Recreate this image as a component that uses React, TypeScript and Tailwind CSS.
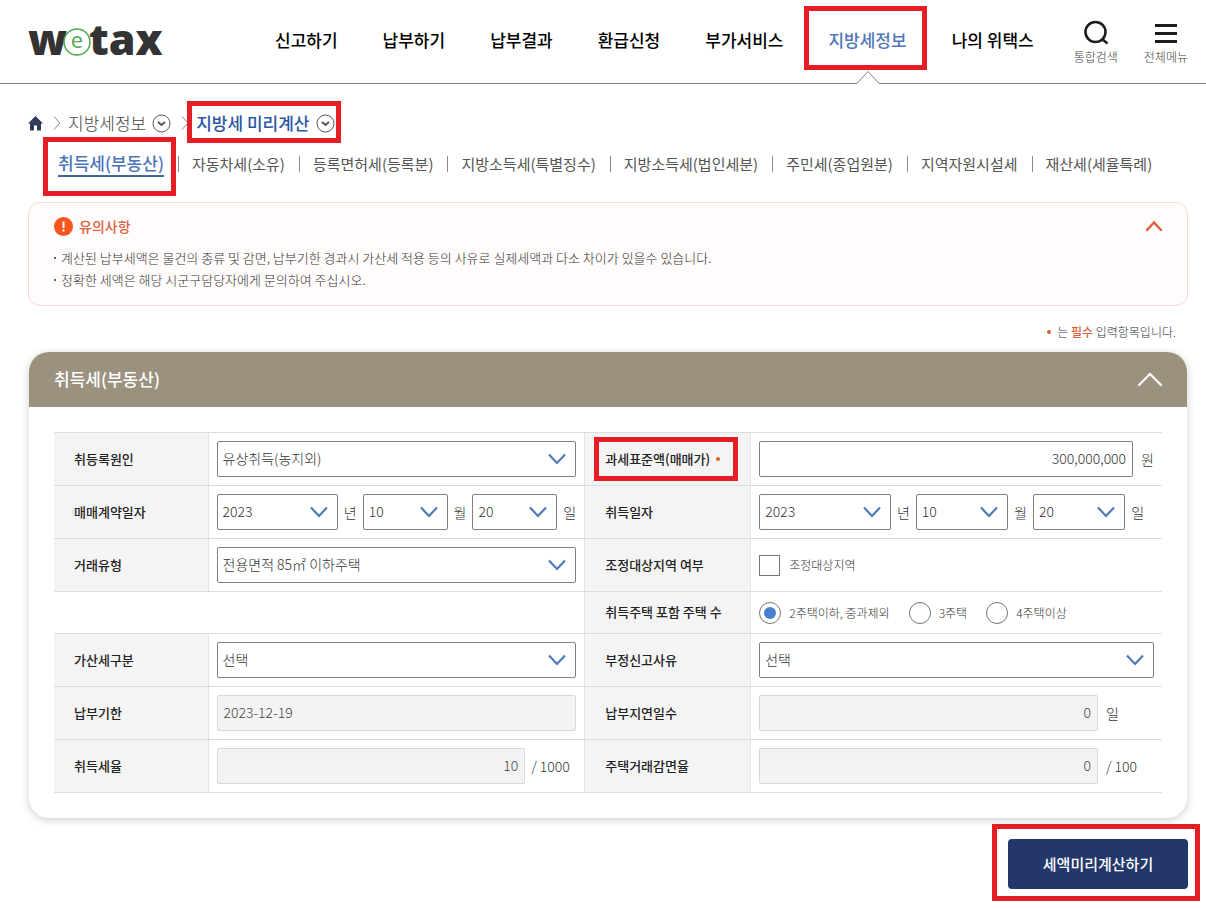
import React, { useState } from 'react';
import clsx from 'clsx';

const NAV_ITEMS = ['신고하기', '납부하기', '납부결과', '환급신청', '부가서비스', '지방세정보', '나의 위택스'];
const ACTIVE_NAV = '지방세정보';

const TABS = [
  '취득세(부동산)',
  '자동차세(소유)',
  '등록면허세(등록분)',
  '지방소득세(특별징수)',
  '지방소득세(법인세분)',
  '주민세(종업원분)',
  '지역자원시설세',
  '재산세(세율특례)',
];

const NOTICES = [
  '계산된 납부세액은 물건의 종류 및 감면, 납부기한 경과시 가산세 적용 등의 사유로 실제세액과 다소 차이가 있을수 있습니다.',
  '정확한 세액은 해당 시군구담당자에게 문의하여 주십시오.',
];

const HOUSE_COUNTS = ['2주택이하, 중과제외', '3주택', '4주택이상'];

// Red guide frame laid over the item the user has to look at
const Highlight: React.FC<{ className: string }> = ({ className }) => (
  <span aria-hidden="true" className={clsx('absolute border-[5px] border-[#e71d25] pointer-events-none', className)} />
);

const Logo: React.FC = () => (
  <a href="#" aria-label="wetax" className="shrink-0">
    <svg width="140" height="72" viewBox="0 0 140 72" className="font-['Open_Sans','Noto_Sans',sans-serif]">
      <text x="0" y="49" fontSize="43" fontWeight="800" fill="#333333">w</text>
      <text x="61" y="49" fontSize="43" fontWeight="800" fill="#333333">tax</text>
      <circle cx="49" cy="36" r="13" fill="#ffffff" stroke="#4fa84f" strokeWidth="1.5" />
      <text x="49" y="42" fontSize="22" fontWeight="500" fill="#4fa84f" textAnchor="middle">e</text>
    </svg>
  </a>
);

const Header: React.FC = () => (
  <header className="h-[84px] border-b border-[#808080] pl-7 pr-[18px] flex items-center">
    <Logo />
    <nav className="ml-[107px] h-full flex gap-[45px] text-[17px] font-medium text-black whitespace-nowrap">
      {NAV_ITEMS.map((item) => (
        <a
          key={item}
          href="#"
          className={clsx('relative flex items-center pb-1', item === ACTIVE_NAV && 'text-[#5078b8]')}
        >
          {item}
          {item === ACTIVE_NAV && (
            <>
              <Highlight className="-left-6 -right-5 top-[6px] h-16" />
              <svg width="24" height="14" viewBox="0 0 24 14" className="absolute left-1/2 -translate-x-1/2 -bottom-px">
                <path d="M1 13.5 L12 1.5 L23 13.5 V14 H1 Z" fill="#ffffff" />
                <path d="M0 13.5 H1 L12 1.5 L23 13.5 H24" fill="none" stroke="#808080" />
              </svg>
            </>
          )}
        </a>
      ))}
    </nav>
    <div className="ml-auto flex gap-[26px] text-xs font-light text-[#444444] whitespace-nowrap">
      <button type="button" className="flex flex-col items-center">
        <svg width="26" height="26" viewBox="0 0 26 26" fill="none" stroke="#1c1c1c" strokeWidth="2.6">
          <circle cx="12.5" cy="13" r="10" />
          <path d="M19 20 L24.5 24.5" />
        </svg>
        <span className="mt-1">통합검색</span>
      </button>
      <button type="button" className="flex flex-col items-center">
        <svg width="26" height="26" viewBox="0 0 26 26" fill="none" stroke="#1c1c1c" strokeWidth="3">
          <path d="M2 6.5 H24 M2 14.5 H24 M2 22.5 H24" />
        </svg>
        <span className="mt-1">전체메뉴</span>
      </button>
    </div>
  </header>
);

const CrumbArrow: React.FC = () => (
  <svg width="8" height="16" viewBox="0 0 8 16" fill="none" stroke="#888888" aria-hidden="true">
    <path d="M1 1.5 L7 8 L1 14.5" />
  </svg>
);

const CrumbToggle: React.FC<{ label: string }> = ({ label }) => (
  <button type="button" aria-label={label} className="ml-[6px]">
    <svg width="19" height="19" viewBox="0 0 19 19" fill="none" stroke="#555555">
      <circle cx="9.5" cy="9.5" r="8.5" />
      <path d="M6 8 L9.5 11 L13 8" strokeWidth="2" />
    </svg>
  </button>
);

const Breadcrumb: React.FC = () => (
  <nav aria-label="현재 위치" className="flex items-center h-[26px] text-[17px] font-light text-[#444444] whitespace-nowrap">
    <a href="#" aria-label="홈">
      <svg width="15" height="15" viewBox="0 0 15 15" fill="#2f3b59">
        <path d="M7.5 0 L15 7.5 H13 V14.5 H9 V9.5 H6 V14.5 H2 V7.5 H0 Z" />
      </svg>
    </a>
    <span className="ml-[10px] mr-[7px]"><CrumbArrow /></span>
    <a href="#">지방세정보</a>
    <CrumbToggle label="지방세정보 메뉴 열기" />
    <span className="ml-[10px] mr-[7px]"><CrumbArrow /></span>
    <span className="relative flex items-center">
      <a href="#" className="font-medium text-[#2a57a5]">지방세 미리계산</a>
      <CrumbToggle label="지방세 미리계산 메뉴 열기" />
      <Highlight className="-left-[9px] -right-[6px] -top-[9px] -bottom-[7px]" />
    </span>
  </nav>
);

const TaxTabs: React.FC = () => (
  <ul className="mt-[14px] pl-[30px] h-7 flex items-center gap-[14px] text-[15px] text-[#555555] whitespace-nowrap">
    {TABS.map((tab, idx) => (
      <li key={tab} className="flex items-center gap-[13px]">
        {idx > 0 && <span aria-hidden="true" className="w-px h-4 bg-[#888888]" />}
        {idx === 0 ? (
          <span className="relative">
            <a href="#" className="block text-[17px] leading-6 font-medium text-[#4a74b8] border-b-2 border-[#40689e]">{tab}</a>
            <Highlight className="-left-[15px] -right-3 -top-[14px] -bottom-[19px]" />
          </span>
        ) : (
          <a href="#">{tab}</a>
        )}
      </li>
    ))}
  </ul>
);

const Notice: React.FC = () => (
  <section className="mt-6 border border-[#f3dcd5] bg-[#fffcfb] rounded-xl pl-[25px] pr-6 pt-[11px] pb-[14px]">
    <div className="flex items-center h-6">
      <svg width="19" height="19" viewBox="0 0 19 19" aria-hidden="true">
        <circle cx="9.5" cy="9.5" r="9.5" fill="#f9561f" />
        <path d="M9.5 4.5 V11" stroke="#ffffff" strokeWidth="2" />
        <path d="M9.5 12.5 V14.5" stroke="#ffffff" strokeWidth="2" />
      </svg>
      <h2 className="ml-[6px] text-sm font-medium text-[#dd5f3c]">유의사항</h2>
      <button type="button" aria-label="유의사항 접기" className="ml-auto">
        <svg width="18" height="12" viewBox="0 0 18 12" fill="none" stroke="#dd5f3c" strokeWidth="2.4" strokeLinecap="round">
          <path d="M2 10 L9 2.5 L16 10" />
        </svg>
      </button>
    </div>
    <ul className="mt-[9px] text-[13px] leading-[22px] font-light text-[#333333]">
      {NOTICES.map((text) => (
        <li key={text} className="flex items-center gap-[5px]">
          <span aria-hidden="true" className="size-[2px] bg-[#666666]" />
          {text}
        </li>
      ))}
    </ul>
  </section>
);

const Chevron: React.FC = () => (
  <svg
    width="18" height="12" viewBox="0 0 18 12" fill="none" stroke="#4f7ab8" strokeWidth="2.2"
    className="absolute right-[10px] top-1/2 -translate-y-1/2 pointer-events-none"
  >
    <path d="M1 1.5 L9 10 L17 1.5" />
  </svg>
);

interface SelectBoxProps {
  id: string;
  value: string;
  label?: string;
  className?: string;
}

const SelectBox: React.FC<SelectBoxProps> = ({ id, value, label, className = 'w-full' }) => (
  <div className={clsx('relative min-w-0', className)}>
    <select
      id={id}
      aria-label={label}
      className="appearance-none block w-full h-9 pl-[5px] pr-8 pb-[2px] border border-[#808080] rounded-xs bg-white text-sm font-light text-[#333333]"
    >
      <option>{value}</option>
    </select>
    <Chevron />
  </div>
);

const DateFields: React.FC<{ id: string; name: string }> = ({ id, name }) => (
  <div className="flex items-center gap-[6px]">
    <SelectBox id={id} value="2023" className="flex-[10]" />
    <span>년</span>
    <SelectBox id={`${id}-month`} label={`${name} 월`} value="10" className="flex-[7]" />
    <span>월</span>
    <SelectBox id={`${id}-day`} label={`${name} 일`} value="20" className="flex-[7]" />
    <span>일</span>
  </div>
);

const READONLY_INPUT = 'min-w-0 flex-1 h-9 px-[6px] pb-[2px] border border-[#d8d8d8] rounded-xs bg-[#f3f3f3] text-sm font-light text-[#444444]';

interface LabelCellProps {
  htmlFor?: string;
  right?: boolean;
  children: React.ReactNode;
}

const LabelCell: React.FC<LabelCellProps> = ({ htmlFor, right, children }) => (
  <th
    scope="row"
    className={clsx(
      'pl-5 bg-[#f4f4f4] border-r border-[#e4e4e4] text-left text-[13px] font-medium text-[#222222] border-y border-y-[#dcdcdc]',
      right && 'border-l'
    )}
  >
    {htmlFor ? <label htmlFor={htmlFor}>{children}</label> : children}
  </th>
);

const Cell: React.FC<{ className?: string; children: React.ReactNode }> = ({ className = 'px-2', children }) => (
  <td className={clsx('border-y border-[#dcdcdc]', className)}>{children}</td>
);

const TaxForm: React.FC = () => {
  const [price, setPrice] = useState('300,000,000');
  const [regulated, setRegulated] = useState(false);
  const [houses, setHouses] = useState(HOUSE_COUNTS[0]);

  return (
    <table className="w-full table-fixed border-collapse text-sm font-light text-[#333333]">
      <colgroup>
        <col className="w-[154px]" />
        <col className="w-[34%]" />
        <col className="w-[166px]" />
        <col />
      </colgroup>
      <tbody>
        <tr className="h-[53px]">
          <LabelCell htmlFor="reason">취등록원인</LabelCell>
          <Cell><SelectBox id="reason" value="유상취득(농지외)" /></Cell>
          <LabelCell htmlFor="price" right>
            <span className="relative inline-flex items-center gap-[6px]">
              과세표준액(매매가)
              <span className="size-1 rounded-full bg-[#d9622b]" />
              <Highlight className="-left-[11px] -right-[18px] -top-[13px] -bottom-[13px]" />
            </span>
          </LabelCell>
          <Cell>
            <div className="flex items-center gap-2">
              <input
                id="price"
                type="text"
                value={price}
                onChange={(e) => setPrice(e.target.value)}
                className="min-w-0 flex-1 h-9 px-[6px] pb-[2px] border border-[#808080] rounded-xs text-right text-sm font-light"
              />
              <span>원</span>
            </div>
          </Cell>
        </tr>
        <tr className="h-[53px]">
          <LabelCell htmlFor="contract">매매계약일자</LabelCell>
          <Cell><DateFields id="contract" name="매매계약일자" /></Cell>
          <LabelCell htmlFor="acquired" right>취득일자</LabelCell>
          <Cell className="pl-2 pr-[18px]"><DateFields id="acquired" name="취득일자" /></Cell>
        </tr>
        <tr className="h-[53px]">
          <LabelCell htmlFor="deal">거래유형</LabelCell>
          <Cell><SelectBox id="deal" value="전용면적 85㎡ 이하주택" /></Cell>
          <LabelCell right>조정대상지역 여부</LabelCell>
          <Cell>
            <label className="flex items-center gap-[9px] text-xs">
              <input
                type="checkbox"
                checked={regulated}
                onChange={(e) => setRegulated(e.target.checked)}
                className="appearance-none size-[21px] border border-[#767676] bg-white p-1 bg-clip-content checked:bg-[#4a7fd0]"
              />
              조정대상지역
            </label>
          </Cell>
        </tr>
        <tr className="h-[42px]">
          <td colSpan={2} />
          <LabelCell right>취득주택 포함 주택 수</LabelCell>
          <Cell>
            <div className="flex items-center gap-[19px] text-xs whitespace-nowrap">
              {HOUSE_COUNTS.map((item) => (
                <label key={item} className="flex items-center gap-2">
                  <input
                    type="radio"
                    name="houses"
                    checked={houses === item}
                    onChange={() => setHouses(item)}
                    className="appearance-none size-[22px] rounded-full border border-[#767676] p-1 bg-clip-content checked:bg-[#4a7fd0]"
                  />
                  {item}
                </label>
              ))}
            </div>
          </Cell>
        </tr>
        <tr className="h-[53px]">
          <LabelCell htmlFor="penalty">가산세구분</LabelCell>
          <Cell><SelectBox id="penalty" value="선택" /></Cell>
          <LabelCell htmlFor="fraud" right>부정신고사유</LabelCell>
          <Cell><SelectBox id="fraud" value="선택" /></Cell>
        </tr>
        <tr className="h-[53px]">
          <LabelCell htmlFor="due">납부기한</LabelCell>
          <Cell>
            <div className="flex"><input id="due" type="text" readOnly value="2023-12-19" className={READONLY_INPUT} /></div>
          </Cell>
          <LabelCell htmlFor="delay" right>납부지연일수</LabelCell>
          <Cell>
            <div className="flex items-center gap-2">
              <input id="delay" type="text" readOnly value="0" className={clsx(READONLY_INPUT, 'text-right')} />
              <span className="w-12">일</span>
            </div>
          </Cell>
        </tr>
        <tr className="h-[53px]">
          <LabelCell htmlFor="rate">취득세율</LabelCell>
          <Cell>
            <div className="flex items-center gap-[6px]">
              <input id="rate" type="text" readOnly value="10" className={clsx(READONLY_INPUT, 'text-right')} />
              <span className="w-[45px]">/ 1000</span>
            </div>
          </Cell>
          <LabelCell htmlFor="discount" right>주택거래감면율</LabelCell>
          <Cell>
            <div className="flex items-center gap-2">
              <input id="discount" type="text" readOnly value="0" className={clsx(READONLY_INPUT, 'text-right')} />
              <span className="w-12">/ 100</span>
            </div>
          </Cell>
        </tr>
      </tbody>
    </table>
  );
};

const App: React.FC = () => (
  <div className="min-h-screen bg-white font-['Noto_Sans_CJK_KR',sans-serif]">
    <Header />
    <main className="pl-7 pr-[18px] pt-[26px] pb-5">
      <Breadcrumb />
      <TaxTabs />
      <Notice />

      <p className="mt-4 pr-3 flex items-center justify-end text-xs leading-5 font-light text-[#333333]">
        <span className="size-1 mr-[6px] rounded-full bg-[#d9622b]" />
        <span>는 <strong className="font-medium text-[#dd5f3c]">필수</strong> 입력항목입니다.</span>
      </p>

      <section className="mt-[10px] mx-px rounded-[20px] bg-white shadow-[0_2px_8px_rgba(0,0,0,0.2)]">
        <div className="h-[55px] pl-[25px] pr-6 pb-[2px] flex items-center justify-between rounded-t-[20px] bg-[#9a917f]">
          <h1 className="text-[17px] font-medium text-white">취득세(부동산)</h1>
          <button type="button" aria-label="취득세(부동산) 접기">
            <svg width="26" height="16" viewBox="0 0 26 16" fill="none" stroke="#ffffff" strokeWidth="2.2" strokeLinecap="round">
              <path d="M2 14 L13 3 L24 14" />
            </svg>
          </button>
        </div>
        <div className="p-[25px]">
          <TaxForm />
        </div>
      </section>

      <div className="mt-[21px] flex justify-end">
        <div className="relative">
          <button type="button" className="block w-[180px] h-[50px] rounded-sm bg-[#22386b] text-[15px] font-medium text-white">
            세액미리계산하기
          </button>
          <Highlight className="-left-4 -right-3 -top-[15px] -bottom-3" />
        </div>
      </div>
    </main>
  </div>
);

export default App;
